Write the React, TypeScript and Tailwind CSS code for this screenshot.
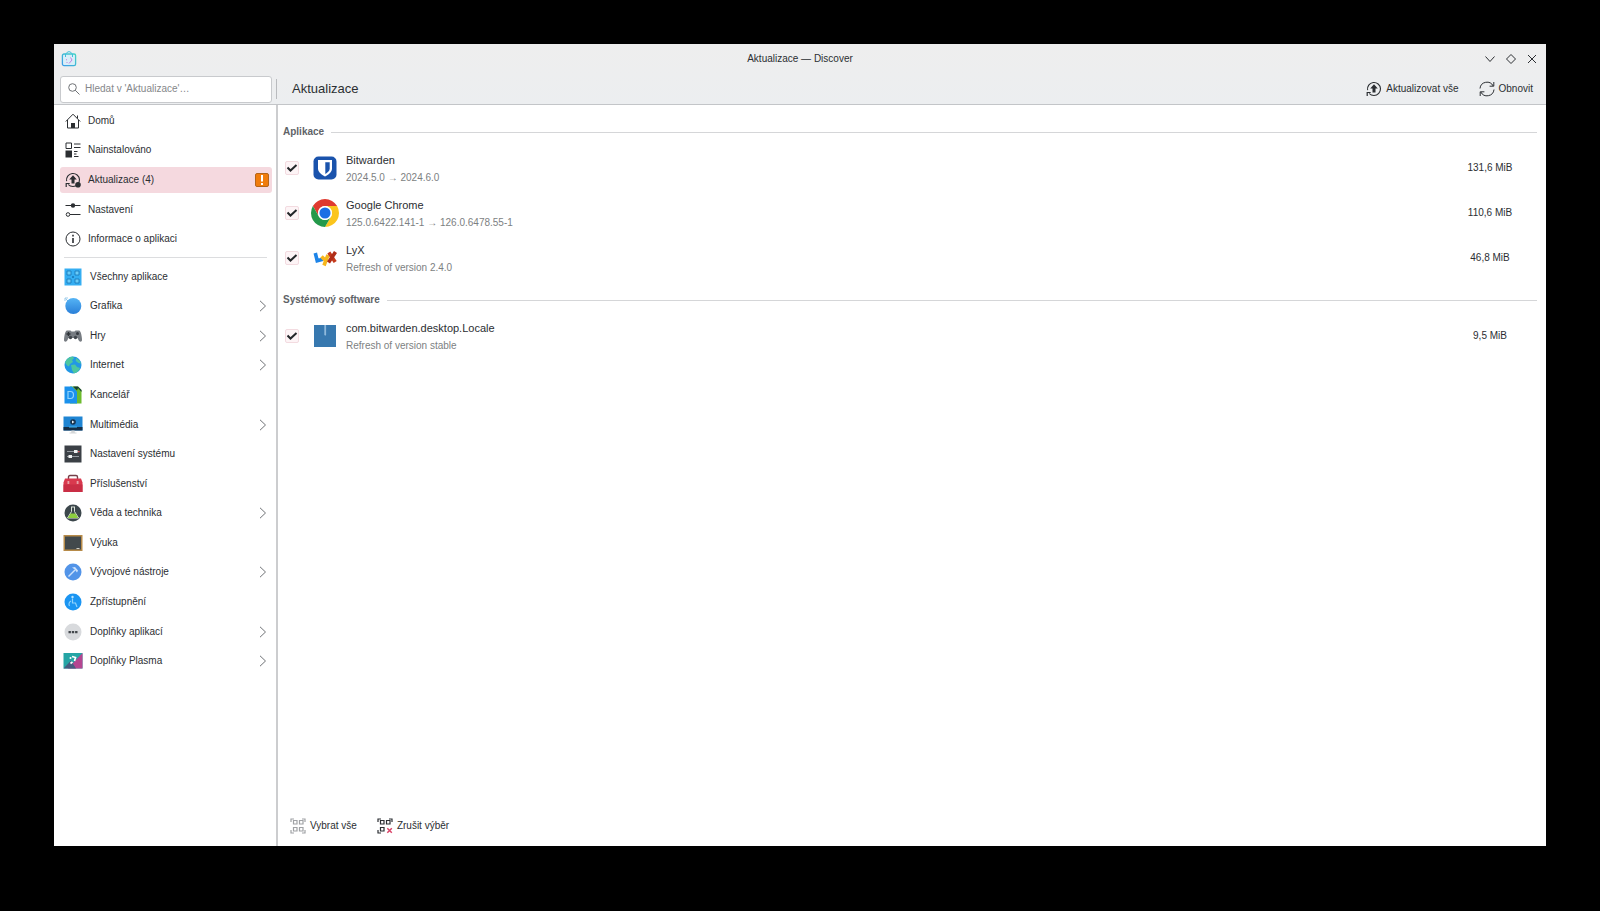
import { useState } from "react";
import type { ReactNode } from "react";

interface NavItem {
  id: string;
  label: string;
  icon: ReactNode;
}

interface Category extends NavItem {
  nested?: boolean;
}

interface Update {
  id: string;
  name: string;
  detail: string;
  size: string;
  icon: ReactNode;
}

interface Section {
  title: string;
  updates: Update[];
}

function LineIcon({ children }: { children: ReactNode }) {
  return (
    <svg
      viewBox="0 0 16 16"
      className="size-4 shrink-0"
      fill="none"
      stroke="currentColor"
      aria-hidden="true"
    >
      {children}
    </svg>
  );
}

function ColorIcon({ children }: { children: ReactNode }) {
  return (
    <svg viewBox="0 0 20 20" className="size-5 shrink-0" aria-hidden="true">
      {children}
    </svg>
  );
}

function UpdateIcon({ badge }: { badge?: boolean }) {
  return (
    <LineIcon>
      <path d="M1.6 9.2A6.5 6.5 0 1 1 8 14.5q-3 0-4.8-2" strokeWidth="1.1" />
      <path d="M1.2 15v-3.500h3.500" strokeWidth="1.2" />
      <path
        d="M8 3.200 4.200 7.600h2.300v4h3v-4h2.300z"
        fill="currentColor"
        stroke="none"
      />
      {badge && (
        <circle cx="13" cy="12.8" r="2.8" fill="currentColor" stroke="none" />
      )}
    </LineIcon>
  );
}

function RefreshIcon() {
  return (
    <LineIcon>
      <path d="M1 7.5A7 7 0 0 1 14.2 5M15 8.5A7 7 0 0 1 1.8 11" />
      <path d="M14.8 1v4.2h-4.2M1.2 15v-4.2h4.2" />
    </LineIcon>
  );
}

function SelectIcon({ clear }: { clear?: boolean }) {
  return (
    <LineIcon>
      <g strokeWidth="1.2">
        <path d="M3.500 2.500h3.500v3.500H3.500zM9.500 2.500H13v3.500H9.500zM3.500 9.500h3.500V13H3.500z" />
        <path d="M1 4V1h3M12 1h3v3M1 12v3h3" />
      </g>
      {clear ? (
        <path d="m10.300 10.300 4.500 4.500m0-4.500-4.500 4.500" stroke="#da4468" strokeWidth="1.5" />
      ) : (
        <path d="M9.500 9.500H13V13H9.500zM12 15h3v-3" strokeWidth="1.2" />
      )}
    </LineIcon>
  );
}

function Chevron() {
  return (
    <svg
      viewBox="0 0 8 12"
      className="h-3 w-2"
      fill="none"
      stroke="#6f7276"
      aria-hidden="true"
    >
      <path d="m1 .8 5.5 5.2L1 11.2" />
    </svg>
  );
}

function DiscoverLogo() {
  return (
    <svg viewBox="0 0 16 16" className="size-4" fill="none" aria-hidden="true">
      <defs>
        <linearGradient id="bag" x1="0" y1="1" x2="1" y2="0">
          <stop offset="0" stopColor="#3b9be8" />
          <stop offset="1" stopColor="#45d3c4" />
        </linearGradient>
      </defs>
      <path
        d="M3 3h10a1.600 1.600 0 0 1 1.600 1.600V13a1.600 1.600 0 0 1-1.600 1.600H3A1.600 1.600 0 0 1 1.400 13V4.600A1.600 1.600 0 0 1 3 3z"
        fill="#d9eef8"
        stroke="url(#bag)"
        strokeWidth="1.3"
      />
      <path d="M4.500 6V3L7 .8h2L11.500 3v3" stroke="#3fbfdc" />
      <path d="M9.500 6.500 11 9l-3 3.500M5 8.500l1 .5M5.500 11.500h1" stroke="#c57de0" />
    </svg>
  );
}

const pages: NavItem[] = [
  {
    id: "home",
    label: "Domů",
    icon: (
      <LineIcon>
        <path d="M.8 8.500 8 1.200l7.200 7.300M2.500 7v8h11V7M12.500 2.500v3" />
        <path d="M6 15v-5h4v5z" fill="currentColor" stroke="none" />
      </LineIcon>
    ),
  },
  {
    id: "installed",
    label: "Nainstalováno",
    icon: (
      <LineIcon>
        <path d="M1 1h5.500v5.500H1zM9 2h6.500M9 5.500h6.500M9 9.500h3.500M9 12h2.500M9 14.500h4.500" />
        <path d="M.5 8.500h6.500v7H.5z" fill="currentColor" stroke="none" />
      </LineIcon>
    ),
  },
  { id: "updates", label: "Aktualizace (4)", icon: <UpdateIcon badge /> },
  {
    id: "settings",
    label: "Nastavení",
    icon: (
      <LineIcon>
        <path d="M.5 3.500h15M5 12.500h10.500" />
        <circle cx="8" cy="3.500" r="2.200" fill="currentColor" stroke="none" />
        <circle cx="3" cy="12.500" r="1.800" />
      </LineIcon>
    ),
  },
  {
    id: "about",
    label: "Informace o aplikaci",
    icon: (
      <LineIcon>
        <circle cx="8" cy="8" r="7" />
        <path d="M8 7v5M8 3.800v1.800" strokeWidth="1.6" />
      </LineIcon>
    ),
  },
];

const categories: Category[] = [
  {
    id: "all",
    label: "Všechny aplikace",
    icon: (
      <ColorIcon>
        <path d="M1.500 1.500h17v17h-17z" fill="#35aef2" />
        <path
          d="M4 4h4v4H4zM12 4h4v4h-4zM4 12h4v4H4zM12 12h4v4h-4z"
          fill="#6accf8"
          stroke="#1673b5"
          strokeWidth=".8"
        />
        <path d="M9 9.300h2v1.400H9z" fill="#1673b5" />
      </ColorIcon>
    ),
  },
  {
    id: "graphics",
    label: "Grafika",
    nested: true,
    icon: (
      <ColorIcon>
        <defs>
          <linearGradient id="sphere" x1="0" y1="0" x2="0" y2="1">
            <stop offset="0" stopColor="#55b4f5" />
            <stop offset="1" stopColor="#2a7fd8" />
          </linearGradient>
        </defs>
        <path d="M2 5V2h3M2.500 2.500 6 6" stroke="#9ccbe9" fill="none" />
        <circle cx="10.300" cy="10" r="8" fill="url(#sphere)" />
      </ColorIcon>
    ),
  },
  {
    id: "games",
    label: "Hry",
    nested: true,
    icon: (
      <ColorIcon>
        <path
          d="M4 4.500h3.500l1 1h3l1-1H16c2 0 3 7 3 9.500 0 2-2.500 2.500-3.500 0l-1-2h-9l-1 2C3.500 16.500 1 16 1 14c0-2.500 1-9.500 3-9.500z"
          fill="#777c82"
        />
        <path d="M5.500 6v4M3.500 8h4" stroke="#2d3237" strokeWidth="1.400" />
        <circle cx="14.500" cy="7.500" r="1.500" fill="#34393f" />
        <circle cx="7.500" cy="11.500" r="1.700" fill="#41464c" />
        <circle cx="12.500" cy="11.500" r="1.700" fill="#41464c" />
      </ColorIcon>
    ),
  },
  {
    id: "internet",
    label: "Internet",
    nested: true,
    icon: (
      <ColorIcon>
        <circle cx="10" cy="10" r="8.500" fill="#2297e5" />
        <path
          d="M2 7.500C3.500 4 6 2 10 1.600l1 2-2 1.400 1 2-3 2-1 2.500-2-1zM8 10l4-.5 2 2.500 3 1c-1 3-3.500 5-6 5.400L9 15z"
          fill="#4cc6a0"
        />
        <path d="m13 3 3.500 2.500 1.800 3-3-.5-2.500-2z" fill="#4cc6a0" />
      </ColorIcon>
    ),
  },
  {
    id: "office",
    label: "Kancelář",
    icon: (
      <ColorIcon>
        <path d="M7 1.500h8l3.500 3.500v13.500H7z" fill="#6dbb2e" />
        <path d="m10 1.500 4 4 1-2.500 3.500 4V5L15 1.500z" fill="#183e36" />
        <path d="M1.500 1.500H9l5 5v12H1.500z" fill="#1b91ec" />
        <path
          d="M5 6.500h2.500c4 0 4 7 0 7H5z"
          fill="none"
          stroke="#8fd2fb"
          strokeWidth="1.200"
        />
      </ColorIcon>
    ),
  },
  {
    id: "multimedia",
    label: "Multimédia",
    nested: true,
    icon: (
      <ColorIcon>
        <path d="M.5 1.500h19v14H.5z" fill="#1f85d3" />
        <path d="M.5 12h19v3.500H.5z" fill="#152f48" />
        <circle cx="10" cy="7" r="2.800" fill="#16324c" />
        <path d="m9 5.500 2.500 1.500L9 8.500z" fill="#e9f2f8" />
        <path d="M6 12h8" stroke="#47b7ef" />
        <path d="M8.500 15.500h3l.5 2.500H8zM6.500 17.500h7v1h-7z" fill="#d3d6d8" />
      </ColorIcon>
    ),
  },
  {
    id: "system",
    label: "Nastavení systému",
    icon: (
      <ColorIcon>
        <path d="M1.500 1.500h17v17h-17z" fill="#3b4046" />
        <path d="M4 7.500h12M4 12.500h12" stroke="#959aa0" strokeWidth="1.200" />
        <path d="M11 6h3.500v3H11zM5.500 11H9v3H5.500z" fill="#f0f1f2" />
        <path d="M15 7h1.500v1.200H15z" fill="#e45b65" />
      </ColorIcon>
    ),
  },
  {
    id: "accessories",
    label: "Příslušenství",
    icon: (
      <ColorIcon>
        <path
          d="M5.500 6V3q0-1.500 1.500-1.500h6q1.500 0 1.500 1.500v3"
          fill="none"
          stroke="#754049"
          strokeWidth="1.400"
        />
        <path d="M2 4.500h16l1.500 4V18H.5V8.500z" fill="#d9394e" />
        <path d="M.5 10.500h19V18H.5z" fill="#c92e45" />
        <path d="M4.500 7h1.800v3H4.500zM13.700 7h1.800v3h-1.800z" fill="#e9a1a8" />
      </ColorIcon>
    ),
  },
  {
    id: "science",
    label: "Věda a technika",
    nested: true,
    icon: (
      <ColorIcon>
        <circle cx="10" cy="10" r="8.500" fill="#3c474c" />
        <path
          d="M8 4h4M8.500 4v4.500L4.500 15h11l-4-6.500V4"
          fill="none"
          stroke="#dbe3d8"
        />
        <path d="M7.500 10.500h5l2.700 4.500H4.800z" fill="#8dcf3f" />
      </ColorIcon>
    ),
  },
  {
    id: "education",
    label: "Výuka",
    icon: (
      <ColorIcon>
        <path d="M.5 2h19v16H.5z" fill="#b78b49" />
        <path d="M2 3.500h16v13H2z" fill="#42494c" />
        <path d="M13.500 15h3v1h-3z" fill="#d0d1c9" />
      </ColorIcon>
    ),
  },
  {
    id: "development",
    label: "Vývojové nástroje",
    nested: true,
    icon: (
      <ColorIcon>
        <circle cx="10" cy="10" r="8.500" fill="#5294e8" />
        <path d="m5.500 14.500 6.500-6.500" stroke="#cde2fb" strokeWidth="1.400" />
        <path d="m9 5.500 3-.5 3 3.500-1 2-2.500-3.300z" fill="#cde2fb" />
      </ColorIcon>
    ),
  },
  {
    id: "accessibility",
    label: "Zpřístupnění",
    icon: (
      <ColorIcon>
        <circle cx="10" cy="10" r="8.500" fill="#1b95f2" />
        <circle cx="9.500" cy="5" r="1.200" fill="#b9e5ff" />
        <path
          d="M9.500 6.500V11h3l1.500 4M8 9a3.500 3.500 0 0 0-1.500 5"
          fill="none"
          stroke="#8fd3fd"
          strokeWidth="1.200"
        />
      </ColorIcon>
    ),
  },
  {
    id: "app-addons",
    label: "Doplňky aplikací",
    nested: true,
    icon: (
      <ColorIcon>
        <circle cx="10" cy="10" r="8.500" fill="#d8dadd" />
        <path
          d="M5.500 9h2.400v2.200H5.500zM8.800 9h2.400v2.200H8.800zM12.100 9h2.400v2.200h-2.400z"
          fill="#42474c"
        />
      </ColorIcon>
    ),
  },
  {
    id: "plasma-addons",
    label: "Doplňky Plasma",
    nested: true,
    icon: (
      <ColorIcon>
        <path d="M.5 2h19v15.500H.5z" fill="#25a5a5" />
        <path d="M19.500 2v15.500H5z" fill="#b54591" />
        <path d="M.5 17.500 8 9.500l5 8z" fill="#465c80" />
        <path
          d="m9 5.500 3.500 1-1 3.500M7.500 12.500l2-1.500"
          fill="none"
          stroke="#fff"
          strokeWidth="1.700"
        />
        <circle cx="7.500" cy="7" r="1" fill="#fff" />
      </ColorIcon>
    ),
  },
];

const sections: Section[] = [
  {
    title: "Aplikace",
    updates: [
      {
        id: "bitwarden",
        name: "Bitwarden",
        detail: "2024.5.0 → 2024.6.0",
        size: "131,6 MiB",
        icon: (
          <svg viewBox="0 0 24 24" className="size-6" aria-hidden="true">
            <rect x=".5" y=".5" width="23" height="23" rx="5" fill="#1a53ac" />
            <path
              d="M5 4h14v8.500c0 4-4.500 6.800-7 8-2.500-1.200-7-4-7-8z"
              fill="#fff"
            />
            <path d="M12.300 6.200h4.400v6.500c0 2.400-2.600 4.200-4.400 5.200z" fill="#1a53ac" />
          </svg>
        ),
      },
      {
        id: "chrome",
        name: "Google Chrome",
        detail: "125.0.6422.141-1 → 126.0.6478.55-1",
        size: "110,6 MiB",
        icon: (
          <svg viewBox="0 0 48 48" className="size-7" aria-hidden="true">
            <path
              d="M3.220 12a24 24 0 0 1 41.560 0H24a12 12 0 0 0-10.390 18z"
              fill="#df3a2f"
            />
            <path
              d="M44.780 12A24 24 0 0 1 24 48l10.390-18A12 12 0 0 0 24 12z"
              fill="#fbc51d"
            />
            <path
              d="M24 48A24 24 0 0 1 3.220 12l10.390 18a12 12 0 0 0 20.780 0z"
              fill="#24994a"
            />
            <circle cx="24" cy="24" r="12" fill="#fff" />
            <circle cx="24" cy="24" r="9.500" fill="#1b6fe4" />
          </svg>
        ),
      },
      {
        id: "lyx",
        name: "LyX",
        detail: "Refresh of version 2.4.0",
        size: "46,8 MiB",
        icon: (
          <svg
            viewBox="0 0 24 24"
            className="size-6"
            fill="none"
            strokeWidth="3.600"
            aria-hidden="true"
          >
            <path d="m2.300 7 1.900 7.800 5.600-1.600" stroke="#1d84e8" />
            <path d="m8.500 10.500 3.800 3.800M15 9l-4 10.500" stroke="#f6b61c" />
            <path d="m15.800 6.500 6.400 9.500" stroke="#c53a1c" />
            <path d="m22.500 6-7 10.500" stroke="#b02d18" />
          </svg>
        ),
      },
    ],
  },
  {
    title: "Systémový software",
    updates: [
      {
        id: "bitwarden-locale",
        name: "com.bitwarden.desktop.Locale",
        detail: "Refresh of version stable",
        size: "9,5 MiB",
        icon: (
          <svg viewBox="0 0 24 24" className="size-6" aria-hidden="true">
            <path d="M1 1h22v22H1z" fill="#3778af" />
            <path d="M11.300 1h1.800v9.500l-.9 1.500-.9-1.500z" fill="#8fb9dc" />
          </svg>
        ),
      },
    ],
  },
];

function TitleBar() {
  return (
    <header className="grid h-[30px] shrink-0 grid-cols-[1fr_auto_1fr] items-center pr-[7px] pl-[7px]">
      <DiscoverLogo />
      <h1>Aktualizace — Discover</h1>
      <div className="flex justify-end gap-[7px]">
        <button type="button" aria-label="Minimalizovat" className="size-[14px]">
          <svg viewBox="0 0 14 14" fill="none" stroke="currentColor">
            <path d="m2.500 4.500 4.500 5 4.500-5" />
          </svg>
        </button>
        <button type="button" aria-label="Maximalizovat" className="size-[14px]">
          <svg viewBox="0 0 14 14" fill="none" stroke="currentColor">
            <path d="M7 2.500 11.500 7 7 11.500 2.500 7z" />
          </svg>
        </button>
        <button type="button" aria-label="Zavřít" className="size-[14px]">
          <svg viewBox="0 0 14 14" fill="none" stroke="currentColor">
            <path d="m3 3 8 8m0-8-8 8" />
          </svg>
        </button>
      </div>
    </header>
  );
}

function Toolbar() {
  const [query, setQuery] = useState("");

  return (
    <div className="flex h-[31px] shrink-0 items-center border-b border-[#c3c5c8] pr-[13px] pl-[6px]">
      <label className="flex h-[27px] w-[212px] items-center gap-[5px] rounded-[3px] border border-[#c8cacd] bg-white px-[7px]">
        <svg
          viewBox="0 0 12 12"
          className="size-3 shrink-0"
          fill="none"
          stroke="#6f7276"
          aria-hidden="true"
        >
          <circle cx="4.500" cy="4.500" r="3.800" />
          <path d="m7.200 7.200 4.300 4.300" />
        </svg>
        <input
          type="search"
          aria-label="Hledat"
          placeholder="Hledat v 'Aktualizace'…"
          value={query}
          onChange={(e) => setQuery(e.target.value)}
          className="w-full min-w-0 leading-4 outline-none placeholder:text-[#85878a]"
        />
      </label>
      <div className="ml-[4px] h-5 w-px bg-[#b9bbbe]" />
      <h2 className="ml-[15px] text-[13px] leading-5">Aktualizace</h2>
      <div className="ml-auto flex gap-[20px]">
        <button type="button" className="flex items-center gap-[4px]">
          <UpdateIcon />
          Aktualizovat vše
        </button>
        <button type="button" className="flex items-center gap-[4px]">
          <RefreshIcon />
          Obnovit
        </button>
      </div>
    </div>
  );
}

function Sidebar() {
  const [active, setActive] = useState("updates");

  return (
    <nav className="w-[224px] shrink-0 border-r-2 border-[#cccdcf] px-[6px] pt-px">
      <ul className="grid h-[148px] auto-rows-fr items-center">
        {pages.map((page) => (
          <li key={page.id}>
            <button
              type="button"
              onClick={() => setActive(page.id)}
              className={`flex h-[26px] w-[212px] items-center gap-[7px] rounded-[3px] pr-[3px] pl-[5px] ${
                active === page.id ? "bg-[#f5d9df]" : ""
              }`}
            >
              {page.icon}
              {page.label}
              {page.id === "updates" && (
                <span className="ml-auto flex h-[14px] w-[14px] items-center justify-center rounded-[2px] border border-[#b5651a] bg-[#f07c0c]">
                  <svg viewBox="0 0 4 10" className="h-[10px] w-1" aria-hidden="true">
                    <path d="M1 0h2v6.500H1zM1 8h2v2H1z" fill="#fff" />
                  </svg>
                </span>
              )}
            </button>
          </li>
        ))}
      </ul>
      <hr className="mt-[3px] mr-[3px] mb-[4px] ml-[4px] border-[#dcdddf]" />
      <ul className="grid h-[414px] auto-rows-fr items-center">
        {categories.map((category) => (
          <li key={category.id}>
            <button
              type="button"
              onClick={() => setActive(category.id)}
              className={`flex h-[26px] w-[212px] items-center gap-[7px] rounded-[3px] pr-[5px] pl-[3px] ${
                active === category.id ? "bg-[#f5d9df]" : ""
              }`}
            >
              {category.icon}
              <span className="mr-auto">{category.label}</span>
              {category.nested && <Chevron />}
            </button>
          </li>
        ))}
      </ul>
    </nav>
  );
}

interface UpdateRowProps {
  update: Update;
  checked: boolean;
  onToggle: () => void;
}

function UpdateRow({ update, checked, onToggle }: UpdateRowProps) {
  return (
    <li>
      <label className="flex h-[45px] items-center pr-[5px] pl-[2px]">
        <span className="grid size-[14px]">
          <input
            type="checkbox"
            checked={checked}
            onChange={onToggle}
            className="col-start-1 row-start-1 size-[14px] appearance-none rounded-[2px] border border-[#f3dbe0] bg-[#fdf4f6]"
          />
          {checked && (
            <svg
              viewBox="0 0 14 14"
              className="pointer-events-none col-start-1 row-start-1 size-[14px]"
              fill="none"
              stroke="#24272a"
              strokeWidth="2"
              aria-hidden="true"
            >
              <path d="m2.500 6.500 3 3L11.500 4" />
            </svg>
          )}
        </span>
        <span className="mr-[7px] ml-[12px] flex size-7 items-center justify-center">
          {update.icon}
        </span>
        <span className="flex flex-col pt-[3px]">
          <span className="text-[11px] leading-[17px]">{update.name}</span>
          <span className="leading-[17px] text-[#7d7f82]">{update.detail}</span>
        </span>
        <span className="ml-auto w-[84px] text-center">{update.size}</span>
      </label>
    </li>
  );
}

function App() {
  const allIds = sections.flatMap((s) => s.updates.map((u) => u.id));
  const [selected, setSelected] = useState<string[]>(allIds);

  const toggle = (id: string) => {
    setSelected(
      selected.includes(id)
        ? selected.filter((s) => s !== id)
        : [...selected, id],
    );
  };

  return (
    <div className="flex min-h-screen bg-black px-[54px] pt-[44px] pb-[65px] font-['Liberation_Sans',sans-serif] text-[10px] leading-4 text-[#2b2e32]">
      <div className="flex min-w-0 flex-1 flex-col bg-white">
        <div className="bg-linear-to-b from-[#eeeeee] to-[#eceef0]">
          <TitleBar />
          <Toolbar />
        </div>
        <div className="flex flex-1">
          <Sidebar />
          <main className="flex min-w-0 flex-1 flex-col gap-[12px] pt-[19px] pr-[9px] pl-[5px]">
            {sections.map((section) => (
              <section key={section.title}>
                <div className="mb-[5px] flex items-center gap-[7px]">
                  <h3 className="font-bold text-[#606367]">{section.title}</h3>
                  <div className="h-px flex-1 bg-[#d5d6d8]" />
                </div>
                <ul>
                  {section.updates.map((update) => (
                    <UpdateRow
                      key={update.id}
                      update={update}
                      checked={selected.includes(update.id)}
                      onToggle={() => toggle(update.id)}
                    />
                  ))}
                </ul>
              </section>
            ))}
            <footer className="mt-auto flex gap-[20px] pb-[12px] pl-[7px]">
              <button
                type="button"
                onClick={() => setSelected(allIds)}
                className="flex items-center gap-[4px]"
              >
                <span className="text-[#a0a2a5]">
                  <SelectIcon />
                </span>
                Vybrat vše
              </button>
              <button
                type="button"
                onClick={() => setSelected([])}
                className="flex items-center gap-[4px]"
              >
                <SelectIcon clear />
                Zrušit výběr
              </button>
            </footer>
          </main>
        </div>
      </div>
    </div>
  );
}

export default App;
